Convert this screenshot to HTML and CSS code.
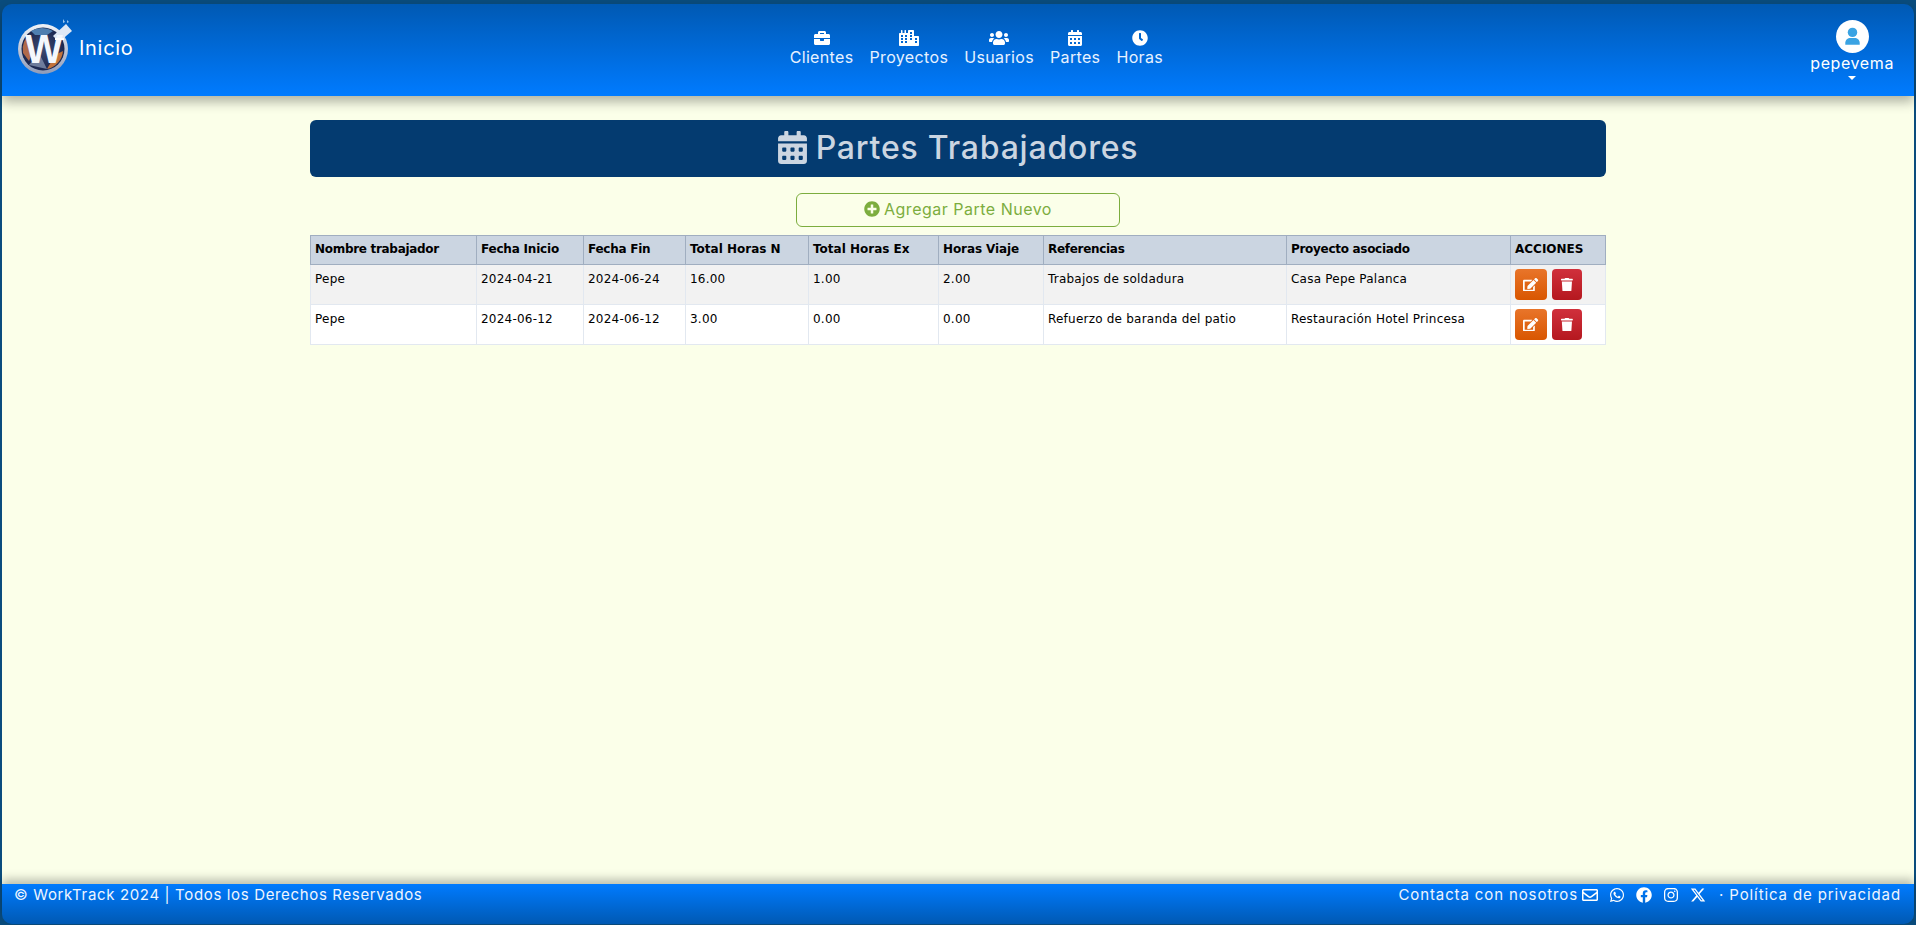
FILE: index.html
```html
<!DOCTYPE html>
<html lang="es">
<head>
<meta charset="utf-8">
<title>Partes Trabajadores</title>
<link rel="stylesheet" href="styles.css">
</head>
<body>
<div class="frame">
  <header class="topbar">
    <a class="brand">
      <svg class="logo" viewBox="0 0 56 56">
        <defs>
          <linearGradient id="ring" x1="0" y1="0" x2="0" y2="1"><stop offset="0" stop-color="#f0f3f8"/><stop offset="1" stop-color="#8f9bb8"/></linearGradient>
          <radialGradient id="lg" cx="50%" cy="50%" r="50%"><stop offset="0" stop-color="#3d4a70"/><stop offset="1" stop-color="#1b2750"/></radialGradient>
        </defs>
        <circle cx="26" cy="30" r="25" fill="url(#ring)"/>
        <circle cx="26" cy="30" r="21.5" fill="url(#lg)"/>
        <path d="M6 34 A20 20 0 0 1 13 15 L17 30 L12 42 Z" fill="#b0694a"/>
        <path d="M30 50 A20 20 0 0 0 46 32 L38 36 Z" fill="#c2733c"/>
        <path d="M14 12 A21 21 0 0 1 36 12 L30 16 L18 16 Z" fill="#4f7fb0"/>
        <path d="M12 46 L22 34 L30 50 Z" fill="#8795b3" opacity=".75"/>
        <path d="M36 17 L49 5 L55 12 L42 23 Z" fill="#dfe8f5"/>
        <path d="M46 0 l2 3 l-2 1 z M50 1 l2 2 l-2 1 z" fill="#9fc7ee"/>
        <text class="logo-w" x="27" y="44" text-anchor="middle">W</text>
        <path d="M38 19 h9 v2 h-9 z" fill="#fff"/>
      </svg>
      <span class="brand-text">Inicio</span>
    </a>
    <nav class="mainnav">
      <a class="navitem"><svg class="navicon" viewBox="0 0 512 512"><path d="M320 336c0 8.84-7.16 16-16 16h-96c-8.84 0-16-7.16-16-16v-48H0v144c0 25.6 22.4 48 48 48h416c25.6 0 48-22.4 48-48V288H320v48zm144-208h-80V80c0-25.6-22.4-48-48-48H176c-25.6 0-48 22.4-48 48v48H48c-25.6 0-48 22.4-48 48v80h512v-80c0-25.6-22.4-48-48-48zm-144 0H192V96h128v32z"/></svg>Clientes</a>
      <a class="navitem"><svg class="navicon" viewBox="0 0 640 512"><path fill-rule="evenodd" d="M616 192H480V24c0-13.26-10.74-24-24-24H312c-13.26 0-24 10.74-24 24v72h-64V16c0-8.84-7.16-16-16-16h-16c-8.84 0-16 7.16-16 16v80h-64V16c0-8.84-7.16-16-16-16H80c-8.84 0-16 7.16-16 16v80H24c-13.26 0-24 10.74-24 24v360c0 17.67 14.33 32 32 32h576c17.67 0 32-14.33 32-32V216c0-13.26-10.75-24-24-24zM64 352h64v64H64zM64 256h64v64H64zM64 160h64v64H64zM192 352h64v64h-64zM192 256h64v64h-64zM192 160h64v64h-64zM352 256h64v64h-64zM352 160h64v64h-64zM352 64h64v64h-64zM512 352h64v64h-64zM512 256h64v64h-64z"/></svg>Proyectos</a>
      <a class="navitem"><svg class="navicon" viewBox="0 0 640 512"><path d="M96 224c35.3 0 64-28.7 64-64s-28.7-64-64-64-64 28.7-64 64 28.7 64 64 64zm448 0c35.3 0 64-28.7 64-64s-28.7-64-64-64-64 28.7-64 64 28.7 64 64 64zm32 32h-64c-17.6 0-33.5 7.1-45.1 18.6 40.3 22.1 68.9 62 75.1 109.4h66c17.7 0 32-14.3 32-32v-32c0-35.3-28.7-64-64-64zm-256 0c61.9 0 112-50.1 112-112S381.9 32 320 32 208 82.1 208 144s50.1 112 112 112zm76.8 32h-8.3c-20.8 10-43.9 16-68.5 16s-47.6-6-68.5-16h-8.3C179.6 288 128 339.6 128 403.2V432c0 26.5 21.5 48 48 48h288c26.5 0 48-21.5 48-48v-28.8c0-63.6-51.6-115.2-115.2-115.2zm-223.7-13.4C161.5 263.1 145.6 256 128 256H64c-35.3 0-64 28.7-64 64v32c0 17.7 14.3 32 32 32h65.9c6.3-47.4 34.9-87.3 75.2-109.4z"/></svg>Usuarios</a>
      <a class="navitem"><svg class="navicon" viewBox="0 0 448 512"><path d="M0 464c0 26.5 21.5 48 48 48h352c26.5 0 48-21.5 48-48V192H0v272zm320-196c0-6.6 5.4-12 12-12h40c6.6 0 12 5.4 12 12v40c0 6.6-5.4 12-12 12h-40c-6.6 0-12-5.4-12-12v-40zm0 128c0-6.6 5.4-12 12-12h40c6.6 0 12 5.4 12 12v40c0 6.6-5.4 12-12 12h-40c-6.6 0-12-5.4-12-12v-40zM192 268c0-6.6 5.4-12 12-12h40c6.6 0 12 5.4 12 12v40c0 6.6-5.4 12-12 12h-40c-6.6 0-12-5.4-12-12v-40zm0 128c0-6.6 5.4-12 12-12h40c6.6 0 12 5.4 12 12v40c0 6.6-5.4 12-12 12h-40c-6.6 0-12-5.4-12-12v-40zM64 268c0-6.6 5.4-12 12-12h40c6.6 0 12 5.4 12 12v40c0 6.6-5.4 12-12 12H76c-6.6 0-12-5.4-12-12v-40zm0 128c0-6.6 5.4-12 12-12h40c6.6 0 12 5.4 12 12v40c0 6.6-5.4 12-12 12H76c-6.6 0-12-5.4-12-12v-40zM400 64h-48V16c0-8.8-7.2-16-16-16h-32c-8.8 0-16 7.2-16 16v48H160V16c0-8.8-7.2-16-16-16h-32c-8.8 0-16 7.2-16 16v48H48C21.5 64 0 85.5 0 112v48h448v-48c0-26.5-21.5-48-48-48z"/></svg>Partes</a>
      <a class="navitem"><svg class="navicon" viewBox="0 0 512 512"><path d="M256,8C119,8,8,119,8,256S119,504,256,504,504,393,504,256,393,8,256,8Zm92.49,313h0l-20,25a16,16,0,0,1-22.49,2.5h0l-67-49.72a40,40,0,0,1-15-31.23V112a16,16,0,0,1,16-16h32a16,16,0,0,1,16,16V256l58,42.5A16,16,0,0,1,348.49,321Z"/></svg>Horas</a>
    </nav>
    <div class="usermenu">
      <svg class="avatar" viewBox="0 0 32 32"><circle cx="16" cy="16" r="16" fill="#fff"/><circle cx="16" cy="12" r="4.6" fill="#3aa3e3"/><path d="M9 24v-1.6c0-3 2.4-4.9 5-4.9h4c2.6 0 5 1.9 5 4.9V24z" fill="#3aa3e3"/></svg>
      <span class="username">pepevema</span>
      <span class="caret"></span>
    </div>
  </header>

  <main class="content">
    <div class="container">
      <h1 class="pagetitle">
        <svg class="titleicon" viewBox="0 0 448 512"><path d="M0 464c0 26.5 21.5 48 48 48h352c26.5 0 48-21.5 48-48V192H0v272zm320-196c0-6.6 5.4-12 12-12h40c6.6 0 12 5.4 12 12v40c0 6.6-5.4 12-12 12h-40c-6.6 0-12-5.4-12-12v-40zm0 128c0-6.6 5.4-12 12-12h40c6.6 0 12 5.4 12 12v40c0 6.6-5.4 12-12 12h-40c-6.6 0-12-5.4-12-12v-40zM192 268c0-6.6 5.4-12 12-12h40c6.6 0 12 5.4 12 12v40c0 6.6-5.4 12-12 12h-40c-6.6 0-12-5.4-12-12v-40zm0 128c0-6.6 5.4-12 12-12h40c6.6 0 12 5.4 12 12v40c0 6.6-5.4 12-12 12h-40c-6.6 0-12-5.4-12-12v-40zM64 268c0-6.6 5.4-12 12-12h40c6.6 0 12 5.4 12 12v40c0 6.6-5.4 12-12 12H76c-6.6 0-12-5.4-12-12v-40zm0 128c0-6.6 5.4-12 12-12h40c6.6 0 12 5.4 12 12v40c0 6.6-5.4 12-12 12H76c-6.6 0-12-5.4-12-12v-40zM400 64h-48V16c0-8.8-7.2-16-16-16h-32c-8.8 0-16 7.2-16 16v48H160V16c0-8.8-7.2-16-16-16h-32c-8.8 0-16 7.2-16 16v48H48C21.5 64 0 85.5 0 112v48h448v-48c0-26.5-21.5-48-48-48z"/></svg>
        Partes Trabajadores
      </h1>
      <div class="addrow">
        <a class="addbtn"><svg class="addicon" viewBox="0 0 512 512"><path d="M256 8C119 8 8 119 8 256s111 248 248 248 248-111 248-248S393 8 256 8zm144 276c0 6.6-5.4 12-12 12h-92v92c0 6.6-5.4 12-12 12h-56c-6.6 0-12-5.4-12-12v-92h-92c-6.6 0-12-5.4-12-12v-56c0-6.6 5.4-12 12-12h92v-92c0-6.6 5.4-12 12-12h56c6.6 0 12 5.4 12 12v92h92c6.6 0 12 5.4 12 12v56z"/></svg>Agregar Parte Nuevo</a>
      </div>
      <table class="datatable">
        <thead>
          <tr>
            <th class="c1">Nombre trabajador</th>
            <th class="c2">Fecha Inicio</th>
            <th class="c3">Fecha Fin</th>
            <th class="c4">Total Horas N</th>
            <th class="c5">Total Horas Ex</th>
            <th class="c6">Horas Viaje</th>
            <th class="c7">Referencias</th>
            <th class="c8">Proyecto asociado</th>
            <th class="c9">ACCIONES</th>
          </tr>
        </thead>
        <tbody>
          <tr class="odd">
            <td>Pepe</td><td>2024-04-21</td><td>2024-06-24</td><td>16.00</td><td>1.00</td><td>2.00</td><td>Trabajos de soldadura</td><td>Casa Pepe Palanca</td>
            <td><div class="actions">
              <a class="act edit"><svg class="acticon" viewBox="0 0 576 512"><path d="M402.6 83.2l90.2 90.2c3.8 3.8 3.8 10 0 13.8L274.4 405.6l-92.8 10.3c-12.4 1.4-22.9-9.1-21.5-21.5l10.3-92.8L388.8 83.2c3.8-3.8 10-3.8 13.8 0zm162-22.9l-48.8-48.8c-15.2-15.2-39.9-15.2-55.2 0l-35.4 35.4c-3.8 3.8-3.8 10 0 13.8l90.2 90.2c3.8 3.8 10 3.8 13.8 0l35.4-35.4c15.2-15.3 15.2-40 0-55.2zM384 346.2V448H64V128h229.8c3.2 0 6.2-1.3 8.5-3.5l40-40c7.6-7.6 2.2-20.5-8.5-20.5H48C21.5 64 0 85.5 0 112v352c0 26.5 21.5 48 48 48h352c26.5 0 48-21.5 48-48V306.2c0-10.7-12.9-16-20.5-8.5l-40 40c-2.2 2.3-3.5 5.3-3.5 8.5z"/></svg></a>
              <a class="act del"><svg class="acticon" viewBox="0 0 448 512"><path d="M432 32H312l-9.4-18.7A24 24 0 0 0 281.1 0H166.8a23.72 23.72 0 0 0-21.4 13.3L136 32H16A16 16 0 0 0 0 48v32a16 16 0 0 0 16 16h416a16 16 0 0 0 16-16V48a16 16 0 0 0-16-16zM53.2 467a48 48 0 0 0 47.9 45h245.8a48 48 0 0 0 47.9-45L416 128H32z"/></svg></a>
            </div></td>
          </tr>
          <tr>
            <td>Pepe</td><td>2024-06-12</td><td>2024-06-12</td><td>3.00</td><td>0.00</td><td>0.00</td><td>Refuerzo de baranda del patio</td><td>Restauración Hotel Princesa</td>
            <td><div class="actions">
              <a class="act edit"><svg class="acticon" viewBox="0 0 576 512"><path d="M402.6 83.2l90.2 90.2c3.8 3.8 3.8 10 0 13.8L274.4 405.6l-92.8 10.3c-12.4 1.4-22.9-9.1-21.5-21.5l10.3-92.8L388.8 83.2c3.8-3.8 10-3.8 13.8 0zm162-22.9l-48.8-48.8c-15.2-15.2-39.9-15.2-55.2 0l-35.4 35.4c-3.8 3.8-3.8 10 0 13.8l90.2 90.2c3.8 3.8 10 3.8 13.8 0l35.4-35.4c15.2-15.3 15.2-40 0-55.2zM384 346.2V448H64V128h229.8c3.2 0 6.2-1.3 8.5-3.5l40-40c7.6-7.6 2.2-20.5-8.5-20.5H48C21.5 64 0 85.5 0 112v352c0 26.5 21.5 48 48 48h352c26.5 0 48-21.5 48-48V306.2c0-10.7-12.9-16-20.5-8.5l-40 40c-2.2 2.3-3.5 5.3-3.5 8.5z"/></svg></a>
              <a class="act del"><svg class="acticon" viewBox="0 0 448 512"><path d="M432 32H312l-9.4-18.7A24 24 0 0 0 281.1 0H166.8a23.72 23.72 0 0 0-21.4 13.3L136 32H16A16 16 0 0 0 0 48v32a16 16 0 0 0 16 16h416a16 16 0 0 0 16-16V48a16 16 0 0 0-16-16zM53.2 467a48 48 0 0 0 47.9 45h245.8a48 48 0 0 0 47.9-45L416 128H32z"/></svg></a>
            </div></td>
          </tr>
        </tbody>
      </table>
    </div>
  </main>

  <footer class="bottombar">
    <span class="copy">© WorkTrack 2024 | Todos los Derechos Reservados</span>
    <div class="foot-right">
      <span class="foot-text">Contacta con nosotros</span>
      <svg class="ficon f-mail" viewBox="0 0 512 512"><path d="M464 64H48C21.49 64 0 85.49 0 112v288c0 26.51 21.49 48 48 48h416c26.51 0 48-21.49 48-48V112c0-26.51-21.49-48-48-48zm0 48v40.805c-22.422 18.259-58.168 46.651-134.587 106.49-16.841 13.247-50.201 45.072-73.413 44.701-23.208.375-56.579-31.459-73.413-44.701C106.18 199.465 70.425 171.067 48 152.805V112h416zM48 400V214.398c22.914 18.251 55.409 43.862 104.938 82.646 21.857 17.205 60.134 55.186 103.062 54.955 42.717.231 80.509-37.199 103.053-54.947 49.528-38.783 82.032-64.401 104.947-82.653V400H48z"/></svg>
      <svg class="ficon f-wa" viewBox="0 0 448 512"><path d="M380.9 97.1C339 55.1 283.2 32 223.9 32c-122.4 0-222 99.6-222 222 0 39.1 10.2 77.3 29.6 111L0 480l117.7-30.9c32.4 17.7 68.9 27 106.1 27h.1c122.3 0 224.1-99.6 224.1-222 0-59.3-25.2-115-67.1-157zm-157 341.6c-33.2 0-65.7-8.9-94-25.7l-6.7-4-69.8 18.3L72 359.2l-4.4-7c-18.5-29.4-28.2-63.3-28.2-98.2 0-101.7 82.8-184.5 184.6-184.5 49.3 0 95.6 19.2 130.4 54.1 34.8 34.9 56.2 81.2 56.1 130.5 0 101.8-84.9 184.6-186.6 184.6zm101.2-138.2c-5.5-2.8-32.8-16.2-37.9-18-5.1-1.9-8.8-2.8-12.5 2.8-3.7 5.6-14.3 18-17.6 21.8-3.2 3.7-6.5 4.2-12 1.4-32.6-16.3-54-29.1-75.5-66-5.7-9.8 5.7-9.1 16.3-30.3 1.8-3.7.9-6.9-.5-9.7-1.4-2.8-12.5-30.1-17.1-41.2-4.5-10.8-9.1-9.3-12.5-9.5-3.2-.2-6.9-.2-10.6-.2-3.7 0-9.7 1.4-14.8 6.9-5.1 5.6-19.4 19-19.4 46.3 0 27.3 19.9 53.7 22.6 57.4 2.8 3.7 39.1 59.7 94.8 83.8 35.2 15.2 49 16.5 66.6 13.9 10.7-1.6 32.8-13.4 37.4-26.4 4.6-13 4.6-24.1 3.2-26.4-1.3-2.5-5-3.9-10.5-6.6z"/></svg>
      <svg class="ficon f-fb" viewBox="0 0 512 512"><path d="M504 256C504 119 393 8 256 8S8 119 8 256c0 123.78 90.69 226.38 209.25 245V327.69h-63V256h63v-54.64c0-62.15 37-96.48 93.67-96.48 27.14 0 55.52 4.84 55.52 4.84v61h-31.28c-30.8 0-40.41 19.12-40.41 38.73V256h68.78l-11 71.69h-57.78V501C413.31 482.38 504 379.78 504 256z"/></svg>
      <svg class="ficon f-ig" viewBox="0 0 448 512"><path d="M224.1 141c-63.6 0-114.9 51.3-114.9 114.9s51.3 114.9 114.9 114.9S339 319.5 339 255.9 287.7 141 224.1 141zm0 189.6c-41.1 0-74.7-33.5-74.7-74.7s33.5-74.7 74.7-74.7 74.7 33.5 74.7 74.7-33.6 74.7-74.7 74.7zm146.4-194.3c0 14.9-12 26.8-26.8 26.8-14.9 0-26.8-12-26.8-26.8s12-26.8 26.8-26.8 26.8 12 26.8 26.8zm76.1 27.2c-1.7-35.9-9.9-67.7-36.2-93.9-26.2-26.2-58-34.4-93.9-36.2-37-2.1-147.9-2.1-184.9 0-35.8 1.7-67.6 9.9-93.9 36.1s-34.4 58-36.2 93.9c-2.1 37-2.1 147.9 0 184.9 1.7 35.9 9.9 67.7 36.2 93.9s58 34.4 93.9 36.2c37 2.1 147.9 2.1 184.9 0 35.9-1.7 67.7-9.9 93.9-36.2 26.2-26.2 34.4-58 36.2-93.9 2.1-37 2.1-147.8 0-184.8zM398.8 388c-7.8 19.6-22.9 34.7-42.6 42.6-29.5 11.7-99.5 9-132.1 9s-102.7 2.6-132.1-9c-19.6-7.8-34.7-22.9-42.6-42.6-11.7-29.5-9-99.5-9-132.1s-2.6-102.7 9-132.1c7.8-19.6 22.9-34.7 42.6-42.6 29.5-11.7 99.5-9 132.1-9s102.7-2.6 132.1 9c19.6 7.8 34.7 22.9 42.6 42.6 11.7 29.5 9 99.5 9 132.1s2.7 102.7-9 132.1z"/></svg>
      <svg class="ficon f-x" viewBox="0 0 512 512"><path d="M389.2 48h70.6L305.6 224.2 487 464H345L233.7 318.6 106.5 464H35.8L200.7 275.5 26.8 48H172.4L272.9 180.9 389.2 48zM364.4 421.8h39.1L151.1 88h-42L364.4 421.8z"/></svg>
      <span class="foot-text foot-policy">· Política de privacidad</span>
    </div>
  </footer>
</div>
</body>
</html>
```
FILE: styles.css
```css
* { box-sizing: border-box; }
html, body { margin: 0; height: 100%; }
body {
  background: #0a4c7d;
  font-family: "Inter", "Open Sans", "Liberation Sans", sans-serif;
  overflow: hidden;
}
.frame {
  height: 925px;
  padding: 4px 2px 1px;
  display: flex;
  flex-direction: column;
}
.topbar {
  height: 92px;
  flex: none;
  display: flex;
  align-items: flex-start;
  justify-content: space-between;
  padding: 0 21px 0 15px;
  background: linear-gradient(180deg, #0059b3 0%, #007bff 100%);
  border-radius: 10px 10px 0 0;
  box-shadow: 0 6px 12px rgba(0, 0, 0, .3);
  color: #fff;
  position: relative;
  z-index: 2;
}
.brand { display: flex; align-items: center; height: 88px; gap: 6px; }
.logo { width: 56px; height: 56px; display: block; margin-top: -2px; }
.logo-w { font-family: "Liberation Sans", sans-serif; font-weight: 700; font-size: 40px; fill: #f4f7fc; }
.brand-text { font-size: 20px; letter-spacing: .7px; }
.mainnav { display: flex; padding-top: 26px; margin-left: 9px; }
.navitem {
  display: flex;
  flex-direction: column;
  align-items: center;
  padding: 0 8px;
  font-size: 16px;
  line-height: 20px;
  letter-spacing: .35px;
  color: #e8f2ff;
}
.navicon { height: 16px; width: auto; fill: #fff; margin-bottom: 1px; display: block; }
.usermenu { display: flex; flex-direction: column; align-items: center; padding-top: 16px; margin-right: -1px; }
.avatar { width: 33px; height: 33px; display: block; }
.username { font-size: 16px; line-height: 20px; letter-spacing: .6px; }
.caret {
  width: 0; height: 0; margin-top: 3px;
  border-left: 4px solid transparent;
  border-right: 4px solid transparent;
  border-top: 4px solid #fff;
}
.content { flex: 1; background: #fbffe9; min-height: 0; }
.container { width: 1296px; margin: 0 auto; padding-top: 24px; }
.pagetitle {
  height: 57px;
  margin: 0;
  padding-bottom: 3px;
  display: flex;
  align-items: center;
  justify-content: center;
  gap: 9px;
  background: #043b70;
  border-radius: 6px;
  color: #cbd5e1;
  font-size: 32px;
  font-weight: 500;
  letter-spacing: .8px;
}
.titleicon { width: 29px; height: 33px; fill: #cbd5e1; display: block; }
.addrow { display: flex; justify-content: center; margin-top: 16px; }
.addbtn {
  width: 324px; height: 34px;
  padding-bottom: 2px;
  display: flex; align-items: center; justify-content: center; gap: 4px;
  border: 1px solid #7cad3e;
  border-radius: 6px;
  color: #7cad3e;
  font-size: 16px;
  letter-spacing: .5px;
}
.addicon { width: 16px; height: 16px; fill: #7cad3e; display: block; }
.datatable {
  width: 1295px;
  margin-top: 8px;
  table-layout: fixed;
  border-collapse: collapse;
  font-family: "DejaVu Sans", "Liberation Sans", sans-serif;
  font-size: 12px;
  color: #000;
  background: #fff;
}
.datatable th, .datatable td { padding: 4px; text-align: left; vertical-align: top; }
.datatable th { background: #cbd5e1; border: 1px solid #a0aec0; font-weight: 700; height: 29px; line-height: 18px; }
.datatable td { border: 1px solid #e2e8f0; height: 40px; line-height: 20px; letter-spacing: .22px; }
.odd td { background: #f2f2f2; }
.c1 { width: 166px; letter-spacing: -.3px; }
.c2 { width: 107px; letter-spacing: -.2px; }
.c3 { width: 102px; letter-spacing: -.25px; }
.c4 { width: 123px; }
.c5 { width: 130px; }
.c6 { width: 105px; letter-spacing: -.1px; }
.c7 { width: 243px; letter-spacing: -.3px; }
.c8 { width: 224px; letter-spacing: -.3px; }
.c9 { width: 95px; }
.actions { display: flex; gap: 5px; }
.act {
  height: 31px; display: flex; align-items: center; justify-content: center;
  border-radius: 4px;
}
.edit { width: 32px; background: linear-gradient(180deg, #e8752a, #d95600); }
.del { width: 30px; background: linear-gradient(180deg, #d0303c, #b5181f); }
.acticon { height: 13.5px; width: auto; fill: #fff; display: block; }
.bottombar {
  height: 40px; flex: none;
  display: flex; align-items: flex-start; justify-content: space-between;
  padding: 0 13px 0 12px;
  background: linear-gradient(180deg, #007bff 0%, #0059b3 100%);
  border-radius: 0 0 10px 10px;
  box-shadow: 0 -5px 10px rgba(0, 0, 0, .25);
  color: #eef5ff;
  font-size: 15px;
  line-height: 22px;
  position: relative;
  z-index: 2;
}
.copy { letter-spacing: .65px; }
.foot-right { display: flex; align-items: center; height: 22px; }
.foot-text { letter-spacing: .88px; }
.ficon { height: 16px; width: auto; fill: #fff; display: block; margin-left: 12px; }
.f-mail { margin-left: 4px; }
.foot-policy { margin-left: 13px; }
```
